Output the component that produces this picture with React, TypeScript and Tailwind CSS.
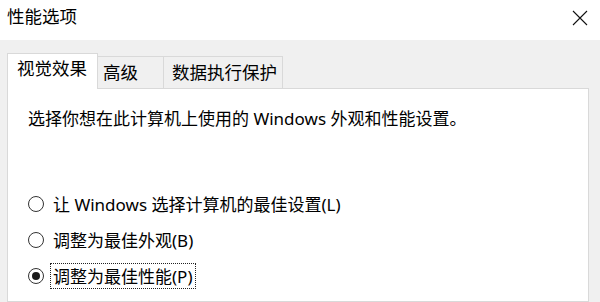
import React from "react"

const font = "font-['Noto_Sans','Noto_Sans_CJK_SC',sans-serif]"

function Radio({ checked }: { checked?: boolean }) {
  return (
    <span className="flex h-[16px] w-[16px] shrink-0 items-center justify-center rounded-full border-[1.5px] border-[#333333] bg-white">
      {checked && <span className="h-[8px] w-[8px] rounded-full bg-[#1a1a1a]" />}
    </span>
  )
}

function Option({ label, checked, focused }: { label: string; checked?: boolean; focused?: boolean }) {
  return (
    <div className="flex h-[26px] items-center">
      <Radio checked={checked} />
      <span
        className={`ml-[6px] flex h-[26px] items-center border px-[2px] leading-[17px] ${
          focused ? "border-dotted border-[#222222]" : "border-transparent"
        }`}
      >
        {label}
      </span>
    </div>
  )
}

export default function App() {
  return (
    <div className={`flex h-[302px] w-[600px] flex-col overflow-hidden bg-white text-black ${font}`}>
      {/* title bar */}
      <div className="flex h-[40px] shrink-0 items-start justify-between pl-[7px] pr-[12px] pt-[8px]">
        <span className="text-[17.5px] leading-[17.5px]">性能选项</span>
        <svg width="16" height="16" viewBox="0 0 16 16" className="mt-[2px]">
          <path d="M1 1 L15 15 M15 1 L1 15" stroke="#111" strokeWidth="1.1" fill="none" />
        </svg>
      </div>

      {/* body */}
      <div className="flex flex-1 flex-col bg-[#f0f0f0] pl-[7px] pr-[11px] pt-[13px]">
        <div className="flex items-end text-[17.5px] leading-[17.5px]">
          <div className="relative z-10 -mb-px h-[36px] w-[91px] border border-b-0 border-[#d9d9d9] bg-white pl-[9px] pt-[6px]">
            视觉效果
          </div>
          <div className="h-[32px] w-[66px] border border-l-0 border-b-0 border-[#d9d9d9] pl-[5px] pt-[7px]">
            高级
          </div>
          <div className="h-[32px] w-[119px] border border-l-0 border-b-0 border-[#d9d9d9] pl-[8px] pt-[7px]">
            数据执行保护
          </div>
        </div>
        <div className="flex-1 border border-[#d9d9d9] bg-white pl-[20px] pt-[21px] text-[17px]">
          <p className="leading-[17px]">选择你想在此计算机上使用的 Windows 外观和性能设置。</p>
          <div className="mt-[64px] flex flex-col gap-[10px]">
            <Option label="让 Windows 选择计算机的最佳设置(L)" />
            <Option label="调整为最佳外观(B)" />
            <Option label="调整为最佳性能(P)" checked focused />
          </div>
        </div>
      </div>
    </div>
  )
}
